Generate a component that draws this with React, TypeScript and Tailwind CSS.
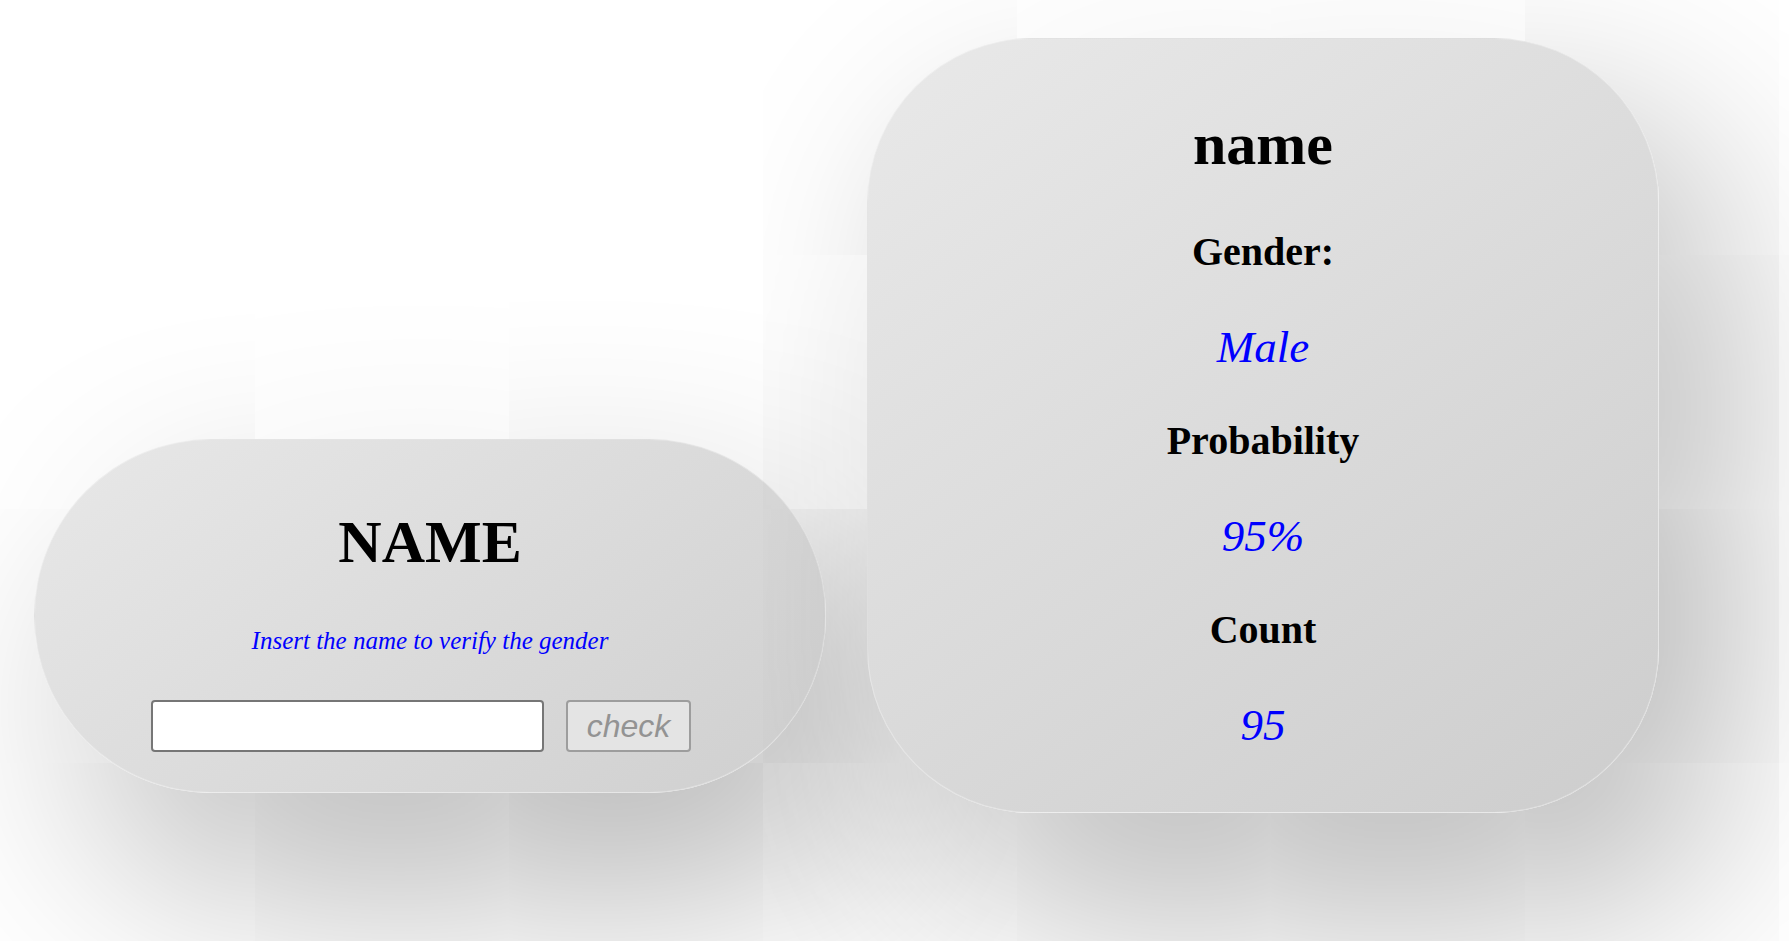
import React from "react";

const serif = "font-['Liberation_Serif','Times_New_Roman',serif]";

export default function App() {
  return (
    <div className="w-full h-[941px] bg-white overflow-hidden flex items-start gap-[41px] pl-[34px] pt-[38px]">
      {/* Left card */}
      <div
        className={`mt-[401px] w-[792px] h-[354px] shrink-0 rounded-[177px] border border-white/30 bg-[linear-gradient(145deg,#e8e8e8,#cfcfcf)] shadow-[60px_90px_220px_#b0b0b0] flex flex-col items-center pt-[67px] ${serif}`}
      >
        <div className="h-[70px] leading-[70px] text-[60px] font-bold text-black">NAME</div>
        <div className="mt-[44px] h-[40px] leading-[40px] text-[25px] italic text-[#0000ff]">
          Insert the name to verify the gender
        </div>
        <div className="mt-[39px] flex items-center gap-[22px] pr-[18px]">
          <input
            type="text"
            className="w-[393px] h-[52px] bg-white border-2 border-[#767676] rounded-[4px] outline-none"
          />
          <button
            disabled
            className="w-[125px] h-[52px] rounded-[4px] border-2 border-[#9d9d9d] bg-[#e4e4e4] text-[32px] italic text-[#939393] font-['Liberation_Sans',Arial,sans-serif] leading-[48px]"
          >
            check
          </button>
        </div>
      </div>

      {/* Right card */}
      <div
        className={`w-[792px] h-[775px] shrink-0 rounded-[165px] border border-white/30 bg-[linear-gradient(145deg,#e9e9e9,#cdcdcd)] shadow-[60px_90px_220px_#b0b0b0] flex flex-col items-center pt-[55px] ${serif}`}
      >
        <div className="h-[100px] leading-[100px] text-[60px] font-bold text-black">name</div>
        <div className="mt-[11px] flex flex-col items-center">
          <div className="h-[95px] leading-[94px] text-[40px] font-bold text-black">Gender:</div>
          <div className="h-[94px] leading-[94px] text-[45px] italic text-[#0000ff]">Male</div>
          <div className="h-[95px] leading-[94px] text-[40px] font-bold text-black">Probability</div>
          <div className="h-[94px] leading-[94px] text-[45px] italic text-[#0000ff]">95%</div>
          <div className="h-[95px] leading-[94px] text-[40px] font-bold text-black">Count</div>
          <div className="h-[94px] leading-[94px] text-[45px] italic text-[#0000ff]">95</div>
        </div>
      </div>
    </div>
  );
}
